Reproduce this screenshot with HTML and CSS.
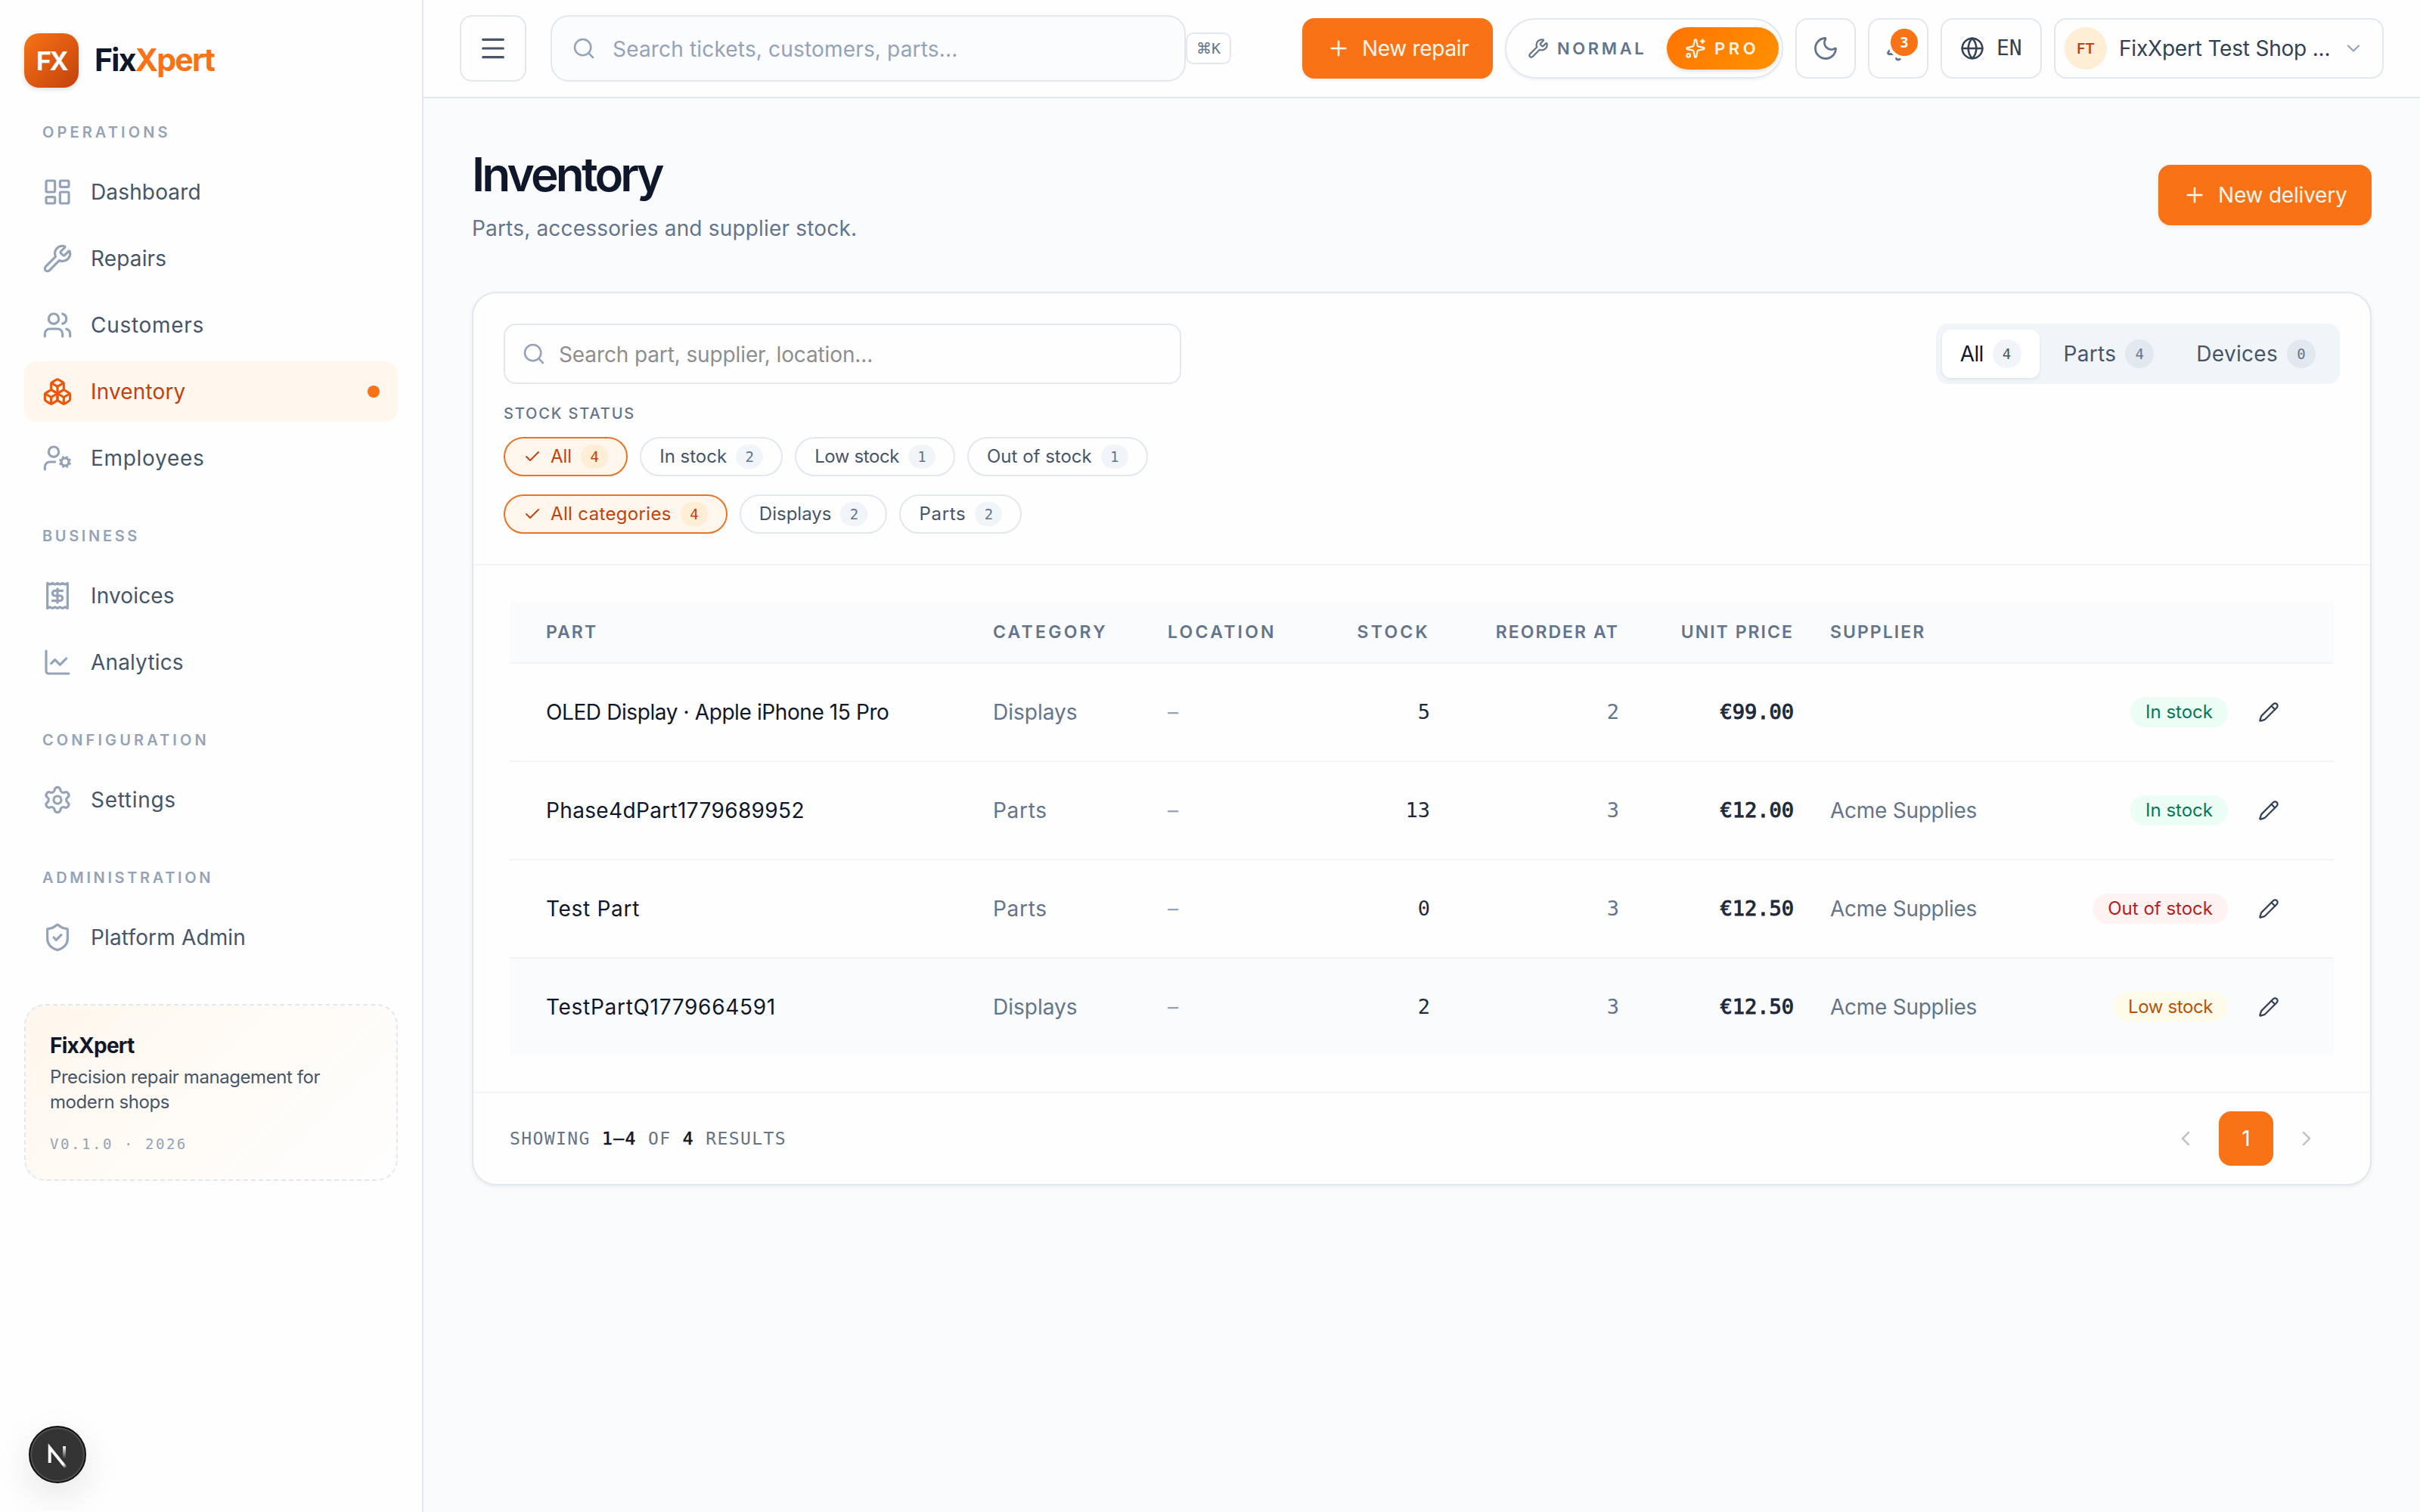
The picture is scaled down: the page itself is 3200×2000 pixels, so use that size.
FILE: index.html
```html
<!DOCTYPE html>
<html lang="en">
<head>
    <meta charset="UTF-8">
    <meta name="viewport" content="width=device-width, initial-scale=1.0">
    <title>Inventory - FixXpert</title>
    <link rel="stylesheet" href="styles.css">
</head>
<body>
    <svg class="sprite" xmlns="http://www.w3.org/2000/svg">
        <symbol id="i-search" viewBox="0 0 24 24"><path d="m21 21-4.34-4.34"/><circle cx="11" cy="11" r="8"/></symbol>
        <symbol id="i-plus" viewBox="0 0 24 24"><path d="M5 12h14"/><path d="M12 5v14"/></symbol>
        <symbol id="i-check" viewBox="0 0 24 24"><path d="M20 6 9 17l-5-5"/></symbol>
        <symbol id="i-wrench" viewBox="0 0 24 24"><path d="M14.7 6.3a1 1 0 0 0 0 1.4l1.6 1.6a1 1 0 0 0 1.4 0l3.106-3.105c.32-.322.863-.22.983.218a6 6 0 0 1-8.259 7.057l-7.91 7.91a1 1 0 0 1-2.999-3l7.91-7.91a6 6 0 0 1 7.057-8.259c.438.12.54.662.219.984z"/></symbol>
        <symbol id="i-pencil" viewBox="0 0 24 24"><path d="M21.174 6.812a1 1 0 0 0-3.986-3.987L3.842 16.174a2 2 0 0 0-.5.83l-1.321 4.352a.5.5 0 0 0 .623.622l4.353-1.32a2 2 0 0 0 .83-.497z"/><path d="m15 5 4 4"/></symbol>
    </svg>

    <div class="app">
        <aside class="sidebar">
            <div class="brand">
                <div class="brand-mark">FX</div>
                <div class="brand-name">Fix<span>Xpert</span></div>
            </div>

            <nav>
                <div class="nav-section">
                    <div class="nav-label wide">OPERATIONS</div>
                    <a class="nav-item"><svg class="icon" viewBox="0 0 24 24"><rect width="7" height="9" x="3" y="3" rx="1"/><rect width="7" height="5" x="14" y="3" rx="1"/><rect width="7" height="9" x="14" y="12" rx="1"/><rect width="7" height="5" x="3" y="16" rx="1"/></svg>Dashboard</a>
                    <a class="nav-item"><svg class="icon"><use href="#i-wrench"/></svg>Repairs</a>
                    <a class="nav-item loose"><svg class="icon" viewBox="0 0 24 24"><path d="M16 21v-2a4 4 0 0 0-4-4H6a4 4 0 0 0-4 4v2"/><circle cx="9" cy="7" r="4"/><path d="M22 21v-2a4 4 0 0 0-3-3.87"/><path d="M16 3.13a4 4 0 0 1 0 7.75"/></svg>Customers</a>
                    <a class="nav-item active"><svg class="icon" viewBox="0 0 24 24"><path d="M2.97 12.92A2 2 0 0 0 2 14.63v3.24a2 2 0 0 0 .97 1.71l3 1.8a2 2 0 0 0 2.06 0L12 19v-5.5l-5-3-4.03 2.42Z"/><path d="m7 16.5-4.74-2.85"/><path d="m7 16.5 5-3"/><path d="M7 16.5v5.17"/><path d="M12 13.5V19l3.97 2.38a2 2 0 0 0 2.06 0l3-1.8a2 2 0 0 0 .97-1.71v-3.24a2 2 0 0 0-.97-1.71L17 10.5l-5 3Z"/><path d="m17 16.5-5-3"/><path d="m17 16.5 4.74-2.85"/><path d="M17 16.5v5.17"/><path d="M7.97 4.42A2 2 0 0 0 7 6.13v4.37l5 3 5-3V6.13a2 2 0 0 0-.97-1.71l-3-1.8a2 2 0 0 0-2.06 0l-3 1.8Z"/><path d="M12 8 7.26 5.15"/><path d="m12 8 4.74-2.85"/><path d="M12 13.5V8"/></svg>Inventory<span class="dot"></span></a>
                    <a class="nav-item loose"><svg class="icon" viewBox="0 0 24 24"><circle cx="18" cy="15" r="3"/><circle cx="9" cy="7" r="4"/><path d="M10 15H6a4 4 0 0 0-4 4v2"/><path d="m21.7 16.4-.9-.3"/><path d="m15.2 13.9-.9-.3"/><path d="m16.6 18.7.3-.9"/><path d="m19.1 12.2.3-.9"/><path d="m19.6 18.7-.4-1"/><path d="m16.8 12.3-.4-1"/><path d="m14.3 16.6 1-.4"/><path d="m20.7 13.8 1-.4"/></svg>Employees</a>
                </div>
                <div class="nav-section">
                    <div class="nav-label">BUSINESS</div>
                    <a class="nav-item"><svg class="icon" viewBox="0 0 24 24"><path d="M4 2v20l2-1 2 1 2-1 2 1 2-1 2 1 2-1 2 1V2l-2 1-2-1-2 1-2-1-2 1-2-1-2 1Z"/><path d="M16 8h-6a2 2 0 1 0 0 4h4a2 2 0 1 1 0 4H8"/><path d="M12 17.5v-11"/></svg>Invoices</a>
                    <a class="nav-item"><svg class="icon" viewBox="0 0 24 24"><path d="M3 3v16a2 2 0 0 0 2 2h16"/><path d="m19 9-5 5-4-4-3 3"/></svg>Analytics</a>
                </div>
                <div class="nav-section">
                    <div class="nav-label wide">CONFIGURATION</div>
                    <a class="nav-item loose"><svg class="icon" viewBox="0 0 24 24"><path d="M9.671 4.136a2.34 2.34 0 0 1 4.659 0 2.34 2.34 0 0 0 3.319 1.915 2.34 2.34 0 0 1 2.33 4.033 2.34 2.34 0 0 0 0 3.831 2.34 2.34 0 0 1-2.33 4.033 2.34 2.34 0 0 0-3.319 1.915 2.34 2.34 0 0 1-4.659 0 2.34 2.34 0 0 0-3.32-1.915 2.34 2.34 0 0 1-2.33-4.033 2.34 2.34 0 0 0 0-3.831A2.34 2.34 0 0 1 6.35 6.051a2.34 2.34 0 0 0 3.319-1.915"/><circle cx="12" cy="12" r="3"/></svg>Settings</a>
                </div>
                <div class="nav-section">
                    <div class="nav-label">ADMINISTRATION</div>
                    <a class="nav-item"><svg class="icon" viewBox="0 0 24 24"><path d="M20 13c0 5-3.5 7.5-7.66 8.95a1 1 0 0 1-.67-.01C7.5 20.5 4 18 4 13V6a1 1 0 0 1 1-1c2 0 4.5-1.2 6.24-2.72a1.17 1.17 0 0 1 1.52 0C14.51 3.81 17 5 19 5a1 1 0 0 1 1 1z"/><path d="m9 12 2 2 4-4"/></svg>Platform Admin</a>
                </div>
            </nav>

            <div class="about">
                <div class="about-title">FixXpert</div>
                <div class="about-text">Precision repair management for<br>modern shops</div>
                <div class="about-version">V0.1.0 · 2026</div>
            </div>
        </aside>

        <div class="main">
            <header class="topbar">
                <button class="menu-btn"><svg class="icon" viewBox="0 0 24 24"><path d="M4 5h16"/><path d="M4 12h16"/><path d="M4 19h16"/></svg></button>
                <div class="global-search">
                    <svg class="icon"><use href="#i-search"/></svg>
                    <span>Search tickets, customers, parts...</span>
                </div>
                <kbd><i>⌘</i>K</kbd>

                <div class="actions">
                    <button class="btn-primary"><svg class="icon"><use href="#i-plus"/></svg>New repair</button>
                    <div class="mode">
                        <span class="mode-item"><svg class="icon"><use href="#i-wrench"/></svg>NORMAL</span>
                        <span class="mode-item mode-pro"><svg class="icon" viewBox="0 0 24 24"><path d="M11.017 2.814a1 1 0 0 1 1.966 0l1.051 5.558a2 2 0 0 0 1.594 1.594l5.558 1.051a1 1 0 0 1 0 1.966l-5.558 1.051a2 2 0 0 0-1.594 1.594l-1.051 5.558a1 1 0 0 1-1.966 0l-1.051-5.558a2 2 0 0 0-1.594-1.594l-5.558-1.051a1 1 0 0 1 0-1.966l5.558-1.051a2 2 0 0 0 1.594-1.594z"/><path d="M20 2v4"/><path d="M22 4h-4"/><circle cx="4" cy="20" r="2"/></svg>PRO</span>
                    </div>
                    <button class="icon-btn"><svg class="icon" viewBox="0 0 24 24"><path d="M20.985 12.486a9 9 0 1 1-9.473-9.472c.405-.022.617.46.402.803a6 6 0 0 0 8.268 8.268c.344-.215.825-.004.803.401"/></svg></button>
                    <button class="icon-btn">
                        <svg class="icon" viewBox="0 0 24 24"><path d="M10.268 21a2 2 0 0 0 3.464 0"/><path d="M3.262 15.326A1 1 0 0 0 4 17h16a1 1 0 0 0 .74-1.673C19.41 13.956 18 12.499 18 8A6 6 0 0 0 6 8c0 4.499-1.411 5.956-2.738 7.326"/></svg>
                        <span class="badge">3</span>
                    </button>
                    <button class="lang"><svg class="icon" viewBox="0 0 24 24"><circle cx="12" cy="12" r="10"/><path d="M12 2a14.5 14.5 0 0 0 0 20 14.5 14.5 0 0 0 0-20"/><path d="M2 12h20"/></svg>EN</button>
                    <button class="account">
                        <span class="avatar">FT</span>
                        <span class="account-name">FixXpert Test Shop ...</span>
                        <svg class="icon" viewBox="0 0 24 24"><path d="m6 9 6 6 6-6"/></svg>
                    </button>
                </div>
            </header>

            <main class="content">
                <div class="page-head">
                    <div>
                        <h1>Inventory</h1>
                        <p>Parts, accessories and supplier stock.</p>
                    </div>
                    <button class="btn-primary btn-delivery"><svg class="icon"><use href="#i-plus"/></svg>New delivery</button>
                </div>

                <section class="card">
                    <div class="filters">
                        <div class="filter-row">
                            <div class="part-search">
                                <svg class="icon"><use href="#i-search"/></svg>
                                <span>Search part, supplier, location...</span>
                            </div>
                            <div class="tabs">
                                <span class="tab active">All <b>4</b></span>
                                <span class="tab">Parts <b>4</b></span>
                                <span class="tab">Devices <b>0</b></span>
                            </div>
                        </div>
                        <div class="filter-label">STOCK STATUS</div>
                        <div class="chips">
                            <span class="chip active"><svg class="icon"><use href="#i-check"/></svg>All <b>4</b></span>
                            <span class="chip">In stock <b>2</b></span>
                            <span class="chip tight">Low stock <b>1</b></span>
                            <span class="chip">Out of stock <b>1</b></span>
                        </div>
                        <div class="chips">
                            <span class="chip active slight"><svg class="icon"><use href="#i-check"/></svg>All categories <b>4</b></span>
                            <span class="chip">Displays <b>2</b></span>
                            <span class="chip loose">Parts <b>2</b></span>
                        </div>
                    </div>

                    <div class="table-wrap">
                        <table>
                            <colgroup>
                                <col class="col-part"><col class="col-category"><col class="col-location"><col class="col-stock"><col class="col-reorder"><col class="col-price"><col class="col-supplier"><col>
                            </colgroup>
                            <thead>
                                <tr>
                                    <th>PART</th>
                                    <th class="spaced">CATEGORY</th>
                                    <th class="spaced">LOCATION</th>
                                    <th class="num spaced">STOCK</th>
                                    <th class="num">REORDER AT</th>
                                    <th class="num">UNIT PRICE</th>
                                    <th>SUPPLIER</th>
                                    <th></th>
                                </tr>
                            </thead>
                            <tbody>
                                <tr>
                                    <td class="name tight">OLED Display · Apple iPhone 15 Pro</td>
                                    <td>Displays</td>
                                    <td class="dash">–</td>
                                    <td class="num stock">5</td>
                                    <td class="num">2</td>
                                    <td class="num price">€99.00</td>
                                    <td></td>
                                    <td><div class="row-end"><span class="status in">In stock</span><button class="edit"><svg class="icon"><use href="#i-pencil"/></svg></button></div></td>
                                </tr>
                                <tr>
                                    <td class="name slight">Phase4dPart1779689952</td>
                                    <td class="loose">Parts</td>
                                    <td class="dash">–</td>
                                    <td class="num stock">13</td>
                                    <td class="num">3</td>
                                    <td class="num price">€12.00</td>
                                    <td class="supplier">Acme Supplies</td>
                                    <td><div class="row-end"><span class="status in">In stock</span><button class="edit"><svg class="icon"><use href="#i-pencil"/></svg></button></div></td>
                                </tr>
                                <tr>
                                    <td class="name loose">Test Part</td>
                                    <td class="loose">Parts</td>
                                    <td class="dash">–</td>
                                    <td class="num stock">0</td>
                                    <td class="num">3</td>
                                    <td class="num price">€12.50</td>
                                    <td class="supplier">Acme Supplies</td>
                                    <td><div class="row-end"><span class="status out">Out of stock</span><button class="edit"><svg class="icon"><use href="#i-pencil"/></svg></button></div></td>
                                </tr>
                                <tr class="hovered">
                                    <td class="name loose">TestPartQ1779664591</td>
                                    <td>Displays</td>
                                    <td class="dash">–</td>
                                    <td class="num stock">2</td>
                                    <td class="num">3</td>
                                    <td class="num price">€12.50</td>
                                    <td class="supplier">Acme Supplies</td>
                                    <td><div class="row-end"><span class="status low tight">Low stock</span><button class="edit"><svg class="icon"><use href="#i-pencil"/></svg></button></div></td>
                                </tr>
                            </tbody>
                        </table>
                    </div>

                    <div class="card-foot">
                        <div class="summary">SHOWING <b>1–4</b> OF <b>4</b> RESULTS</div>
                        <div class="pager">
                            <button class="page-nav"><svg class="icon" viewBox="0 0 24 24"><path d="m15 18-6-6 6-6"/></svg></button>
                            <button class="page-current">1</button>
                            <button class="page-nav"><svg class="icon" viewBox="0 0 24 24"><path d="m9 18 6-6-6-6"/></svg></button>
                        </div>
                    </div>
                </section>
            </main>
        </div>
    </div>

    <div class="dev-badge">
        <svg viewBox="0 0 40 40" fill="none">
            <defs>
                <linearGradient id="g1" gradientUnits="userSpaceOnUse" x1="22" y1="22" x2="29" y2="31"><stop stop-color="#fff"/><stop offset=".6" stop-color="#fff"/><stop offset="1" stop-color="#fff" stop-opacity="0"/></linearGradient>
                <linearGradient id="g2" gradientUnits="userSpaceOnUse" x1="27" y1="12" x2="27" y2="23"><stop stop-color="#fff"/><stop offset="1" stop-color="#fff" stop-opacity="0"/></linearGradient>
            </defs>
            <path d="M13.8 26.7V13.2L27.8 30.5" stroke="url(#g1)" stroke-width="2.6"/>
            <path d="M26.7 12v11" stroke="url(#g2)" stroke-width="2.6"/>
        </svg>
    </div>
</body>
</html>
```

FILE: styles.css
```css
* {
    box-sizing: border-box;
}
body {
    margin: 0;
    font-family: Inter, "Liberation Sans", sans-serif;
    font-size: 28px;
    line-height: 1.5;
    color: #334155;
    background: #fafbfd;
}
button {
    font: inherit;
    padding: 0;
    border: none;
    background: none;
    color: inherit;
}
.sprite {
    display: none;
}
.icon {
    width: 32px;
    height: 32px;
    flex: none;
    fill: none;
    stroke: currentColor;
    stroke-width: 1.9;
    stroke-linecap: round;
    stroke-linejoin: round;
}
.app {
    display: flex;
    min-height: 2000px;
}

/* Sidebar */
.sidebar {
    width: 560px;
    flex: none;
    padding: 44px 32px 0;
    background: #fefefe;
    border-right: 2px solid #e2e8f0;
}
.brand {
    display: flex;
    align-items: center;
    gap: 21px;
    height: 72px;
    margin-bottom: 44px;
}
.brand-mark {
    width: 72px;
    height: 72px;
    border-radius: 20px;
    background: linear-gradient(135deg, #f97316, #c2410c);
    box-shadow: 0 2px 6px rgba(15, 23, 42, 0.15);
    color: #fff;
    font-size: 34px;
    font-weight: 700;
    line-height: 74px;
    text-align: center;
    letter-spacing: -2.5px;
}
.brand-name {
    font-size: 41px;
    font-weight: 700;
    letter-spacing: -1.75px;
    color: #0f172a;
}
.brand-name span {
    color: #f97316;
}
.nav-section {
    margin-bottom: 48px;
}
.nav-label {
    padding: 0 24px;
    margin-bottom: 24px;
    font-size: 20px;
    line-height: 30px;
    font-weight: 600;
    letter-spacing: 3.65px;
    color: #94a3b8;
}
.nav-label.wide {
    letter-spacing: 4.1px;
}
.nav-item {
    display: flex;
    align-items: center;
    gap: 24px;
    height: 80px;
    padding: 0 24px;
    margin-bottom: 8px;
    border-radius: 16px;
    letter-spacing: 0.15px;
    color: #475569;
}
.nav-item:last-child {
    margin-bottom: 0;
}
.nav-item .icon {
    width: 40px;
    height: 40px;
    color: #94a3b8;
}
.nav-item.active {
    background: #fff7ed;
    color: #c2410c;
}
.nav-item.active .icon {
    color: #ea580c;
}
.dot {
    width: 16px;
    height: 16px;
    margin-left: auto;
    border-radius: 50%;
    background: #f97316;
}
.about {
    height: 234px;
    padding: 32px;
    border: 2px dashed #e2e8f0;
    border-radius: 28px;
    background: linear-gradient(135deg, #fff7ed, #fefefe);
}
.about-title {
    font-weight: 700;
    letter-spacing: -0.74px;
    color: #0f172a;
    margin-bottom: 4px;
}
.about-text {
    font-size: 24px;
    line-height: 33px;
    letter-spacing: -0.42px;
    color: #475569;
    margin-bottom: 24px;
    white-space: nowrap;
}
.about-version {
    font: 19px/31px "DejaVu Sans Mono", monospace;
    letter-spacing: 2.55px;
    color: #94a3b8;
}

/* Top bar */
.main {
    flex: 1;
    min-width: 0;
}
.topbar {
    display: flex;
    align-items: center;
    height: 130px;
    padding: 0 48px;
    background: #fefefe;
    border-bottom: 2px solid #e2e8f0;
}
.menu-btn {
    display: grid;
    place-items: center;
    width: 88px;
    height: 88px;
    margin-right: 32px;
    border: 2px solid #e2e8f0;
    border-radius: 16px;
    color: #475569;
}
.menu-btn .icon {
    width: 40px;
    height: 40px;
}
.global-search {
    display: flex;
    align-items: center;
    gap: 22px;
    width: 840px;
    height: 88px;
    padding: 0 26px;
    border: 2px solid #e2e8f0;
    border-radius: 24px;
    background: #fafcfd;
    color: #94a3b8;
    letter-spacing: 0.17px;
}
.global-search span,
.part-search span {
    padding-top: 2px;
}
kbd {
    display: flex;
    align-items: center;
    justify-content: center;
    width: 60px;
    height: 42px;
    border: 2px solid #e2e8f0;
    border-radius: 10px;
    font: 20px/1 "DejaVu Sans Mono", monospace;
    color: #64748b;
}
kbd i {
    font: 20px/1 "DejaVu Sans", sans-serif;
}
.actions {
    display: flex;
    gap: 16px;
    margin-left: auto;
}
.btn-primary {
    display: flex;
    align-items: center;
    gap: 15px;
    width: 252px;
    height: 80px;
    padding-left: 32px;
    border-radius: 16px;
    background: #f97316;
    box-shadow: 0 2px 4px rgba(15, 23, 42, 0.08);
    color: #fff7ed;
    letter-spacing: -0.3px;
    white-space: nowrap;
}
.mode {
    display: flex;
    align-items: center;
    gap: 4px;
    width: 368px;
    height: 80px;
    padding: 4px;
    border: 2px solid #e2e8f0;
    border-radius: 40px;
    box-shadow: 0 2px 4px rgba(15, 23, 42, 0.05);
}
.mode-item {
    display: flex;
    align-items: center;
    gap: 11px;
    width: 204px;
    height: 56px;
    padding-left: 24px;
    border-radius: 28px;
    color: #64748b;
    font-size: 22px;
    font-weight: 600;
    letter-spacing: 3.6px;
}
.mode-item .icon {
    width: 28px;
    height: 28px;
}
.mode-pro {
    width: 148px;
    background: linear-gradient(135deg, #ff7300, #ff9200);
    box-shadow: 0 2px 4px rgba(15, 23, 42, 0.15);
    color: #fff7ed;
    letter-spacing: 4.6px;
}
.icon-btn {
    position: relative;
    display: grid;
    place-items: center;
    width: 80px;
    height: 80px;
    border: 2px solid #e2e8f0;
    border-radius: 16px;
    color: #64748b;
}
.icon-btn .icon {
    width: 36px;
    height: 36px;
}
.badge {
    position: absolute;
    top: 12px;
    right: 12px;
    width: 36px;
    height: 36px;
    border-radius: 50%;
    background: #f97316;
    box-shadow: 0 0 0 4px #fefefe;
    color: #fff;
    font: bold 19px/37px "DejaVu Sans Mono", monospace;
    text-align: center;
}
.lang {
    display: flex;
    align-items: center;
    gap: 16px;
    width: 134px;
    height: 80px;
    padding-left: 24px;
    border: 2px solid #e2e8f0;
    border-radius: 16px;
    font-family: "DejaVu Sans Mono", monospace;
}
.account {
    display: flex;
    align-items: center;
    gap: 16px;
    width: 436px;
    height: 80px;
    padding: 0 24px 0 12px;
    border: 2px solid #e2e8f0;
    border-radius: 16px;
}
.account-name {
    letter-spacing: -0.2px;
    white-space: nowrap;
}
.account .icon {
    width: 28px;
    height: 28px;
    margin-left: auto;
    color: #94a3b8;
}
.avatar {
    width: 56px;
    height: 56px;
    border-radius: 50%;
    background: #ffedd5;
    color: #c2410c;
    font-size: 19px;
    font-weight: 600;
    line-height: 57px;
    text-align: center;
}

/* Page */
.content {
    padding: 56px 64px;
}
.page-head {
    display: flex;
    align-items: center;
    justify-content: space-between;
    height: 144px;
    margin-bottom: 56px;
}
h1 {
    margin: 0;
    font-size: 62px;
    line-height: 75px;
    font-weight: 600;
    letter-spacing: -3.8px;
    color: #0f172a;
}
.page-head p {
    margin: 13px 0 0;
    letter-spacing: 0.18px;
    color: #64748b;
}
.btn-delivery {
    width: 282px;
    letter-spacing: -0.2px;
}
.card {
    border: 2px solid #e2e8f0;
    border-radius: 32px;
    background: #fefefe;
    box-shadow: 0 2px 6px rgba(15, 23, 42, 0.06);
}
.filters {
    height: 360px;
    padding: 40px 40px 0;
    border-bottom: 2px solid #f1f5f9;
}
.filter-row {
    display: flex;
    justify-content: space-between;
    height: 80px;
}
.part-search {
    display: flex;
    align-items: center;
    gap: 17px;
    width: 896px;
    padding: 0 22px;
    border: 2px solid #e2e8f0;
    border-radius: 16px;
    color: #8e8e8e;
    letter-spacing: -0.12px;
}
.part-search .icon {
    color: #94a3b8;
}
.tabs {
    display: flex;
    gap: 8px;
    padding: 8px;
    border-radius: 16px;
    background: #f1f5f9;
}
.tab {
    display: flex;
    align-items: center;
    gap: 12px;
    padding: 0 24px;
    border-radius: 12px;
    color: #475569;
    letter-spacing: 0.3px;
}
.tab b {
    width: 38px;
    height: 38px;
    border-radius: 19px;
    background: #e2e8f0;
    color: #64748b;
    font: 19px/38px "DejaVu Sans Mono", monospace;
    letter-spacing: 0;
    text-align: center;
}
.tab.active {
    background: #fff;
    box-shadow: 0 2px 4px rgba(15, 23, 42, 0.08);
    color: #0f172a;
    letter-spacing: -0.7px;
}
.tab.active b {
    background: #f1f5f9;
    color: #475569;
}
.filter-label {
    height: 30px;
    margin: 24px 0 16px;
    font-size: 20px;
    line-height: 30px;
    font-weight: 500;
    letter-spacing: 1.85px;
    color: #64748b;
}
.chips {
    display: flex;
    gap: 16px;
    margin-bottom: 24px;
}
.chip {
    display: flex;
    align-items: center;
    gap: 12px;
    height: 52px;
    padding: 0 24px;
    border: 2px solid #e2e8f0;
    border-radius: 26px;
    color: #475569;
    font-size: 24px;
}
.chip .icon {
    width: 24px;
    height: 24px;
}
.chip b {
    width: 36px;
    height: 32px;
    border-radius: 16px;
    background: #f1f5f9;
    color: #64748b;
    font: 19px/33px "DejaVu Sans Mono", monospace;
    letter-spacing: 0;
    text-align: center;
}
.chip.active {
    border-color: #ea7426;
    background: #fff7ed;
    color: #c2410c;
}
.chip.active b {
    background: #ffedd5;
    color: #c2410c;
}

/* Table */
.table-wrap {
    padding: 48px;
}
table {
    width: 100%;
    table-layout: fixed;
    border-collapse: separate;
    border-spacing: 0;
}
.col-part {
    width: 615px;
}
.col-category {
    width: 231px;
}
.col-location {
    width: 230px;
}
.col-stock {
    width: 165px;
}
.col-reorder {
    width: 250px;
}
.col-price {
    width: 231px;
}
.col-supplier {
    width: 290px;
}
th,
td {
    padding: 0 24px;
    text-align: left;
    white-space: nowrap;
    border-bottom: 2px solid #f1f5f9;
}
th:first-child,
td:first-child {
    padding-left: 48px;
}
th:last-child,
td:last-child {
    padding-right: 48px;
}
th {
    height: 82px;
    background: #fafbfd;
    color: #64748b;
    font-size: 23px;
    font-weight: 600;
    letter-spacing: 2.05px;
}
th.spaced {
    letter-spacing: 3.25px;
}
td {
    height: 130px;
    color: #64748b;
}
tbody tr:last-child td {
    height: 128px;
    border-bottom: none;
}
.hovered td {
    background: #fafbfd;
}
.num {
    text-align: right;
}
td.num {
    font-family: "DejaVu Sans Mono", monospace;
    font-size: 27px;
}
td.stock {
    color: #1e293b;
}
td.price {
    color: #1e293b;
    -webkit-text-stroke: 1px;
}
td.name {
    color: #0f172a;
}
td.supplier {
    letter-spacing: -0.27px;
}
td.dash {
    color: #94a3b8;
}
.row-end {
    display: flex;
    align-items: center;
    justify-content: flex-end;
    gap: 16px;
}
.status {
    height: 40px;
    padding: 0 20px;
    border-radius: 20px;
    font-size: 24px;
    line-height: 40px;
}
.status.in {
    background: #ecfdf5;
    color: #047857;
}
.status.out {
    background: #fef2f2;
    color: #b91c1c;
}
.status.low {
    background: #fffbeb;
    color: #b45309;
}
.edit {
    display: grid;
    place-items: center;
    width: 76px;
    height: 64px;
    color: #334155;
}
.edit .icon {
    width: 28px;
    height: 28px;
}

/* Footer */
.card-foot {
    display: flex;
    align-items: center;
    justify-content: space-between;
    height: 122px;
    padding: 0 48px;
    border-top: 2px solid #f1f5f9;
}
.summary {
    font: 23px/36px "DejaVu Sans Mono", monospace;
    letter-spacing: 1.4px;
    color: #64748b;
}
.summary b {
    font-weight: normal;
    color: #0f172a;
    -webkit-text-stroke: 0.6px;
}
.pager {
    display: flex;
    gap: 8px;
}
.page-nav,
.page-current {
    display: grid;
    place-items: center;
    width: 72px;
    height: 72px;
    border-radius: 16px;
}
.page-nav {
    color: #c0c4ca;
}
.page-current {
    background: #f97316;
    color: #fff;
}

/* Tracking tweaks */
.tight {
    letter-spacing: -0.4px;
}
.slight {
    letter-spacing: 0.35px;
}
.loose {
    letter-spacing: 0.7px;
}

.dev-badge {
    position: fixed;
    left: 38px;
    bottom: 38px;
    width: 76px;
    height: 76px;
    border-radius: 50%;
    border: 2px solid #111;
    background: #333;
    box-shadow: inset 0 0 0 2px #505050, 0 16px 48px rgba(0, 0, 0, 0.1);
}
.dev-badge svg {
    position: absolute;
    left: 5px;
    top: 7px;
    width: 60px;
    height: 60px;
}
```
